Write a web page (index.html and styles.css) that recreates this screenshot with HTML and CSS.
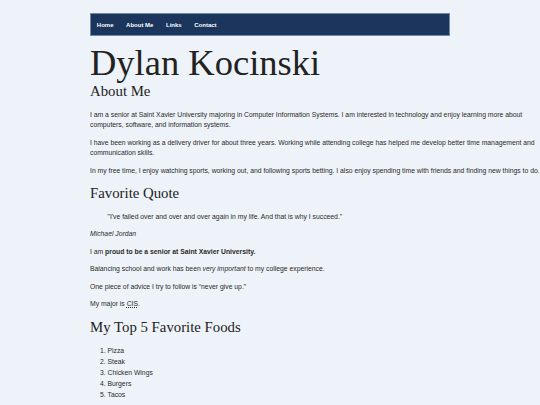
FILE: index.html
```html
<!DOCTYPE html>
<html lang="en">
<head>
<meta charset="utf-8">
<title>Dylan Kocinski</title>
<link rel="stylesheet" href="styles.css">
</head>
<body>
<div class="page">
  <nav class="nav">
    <a href="#">Home</a>
    <a href="#">About Me</a>
    <a href="#">Links</a>
    <a href="#">Contact</a>
  </nav>
  <h1 class="title">Dylan Kocinski</h1>
  <h2 class="sub">About Me</h2>
  <p>I am a senior at Saint Xavier University majoring in Computer Information Systems. I am interested in technology and enjoy learning more about computers, software, and information systems.</p>
  <p>I have been working as a delivery driver for about three years. Working while attending college has helped me develop better time management and communication skills.</p>
  <p>In my free time, I enjoy watching sports, working out, and following sports betting. I also enjoy spending time with friends and finding new things to do.</p>
  <h2 class="section">Favorite Quote</h2>
  <blockquote class="quote">"I've failed over and over and over again in my life. And that is why I succeed."</blockquote>
  <p><cite>Michael Jordan</cite></p>
  <p>I am <strong>proud to be a senior at Saint Xavier University.</strong></p>
  <p>Balancing school and work has been <em>very important</em> to my college experience.</p>
  <p>One piece of advice I try to follow is <q>never give up.</q></p>
  <p>My major is <abbr title="Computer Information Systems">CIS</abbr>.</p>
  <h2 class="section">My Top 5 Favorite Foods</h2>
  <ol class="foods">
    <li>Pizza</li>
    <li>Steak</li>
    <li>Chicken Wings</li>
    <li>Burgers</li>
    <li>Tacos</li>
  </ol>
</div>
</body>
</html>
```
FILE: styles.css
```css
html, body {
  margin: 0;
  padding: 0;
  background: #eef3f9;
  overflow: hidden;
}
body {
  font-family: "Liberation Sans", Arial, sans-serif;
  color: #2a2a2a;
  font-size: 6.8px;
  line-height: 10.5px;
}
.page {
  padding: 13px 0 0 90px;
}
.nav {
  width: 358px;
  height: 21px;
  background: #1b355c;
  border: 1px solid #7189aa;
  display: flex;
  align-items: center;
  padding: 0;
  box-sizing: content-box;
}
.nav a {
  color: #fff;
  font-weight: bold;
  font-size: 6px;
  padding: 0 6.3px;
  text-decoration: none;
  line-height: 1;
}
.nav a:first-child {
  padding-left: 5.8px;
}
.title,
.sub,
.section {
  font-family: "Liberation Serif", "Times New Roman", serif;
  font-weight: normal;
  color: #222;
}
.title {
  font-size: 36.5px;
  line-height: 36.5px;
  margin: 9.4px 0 0;
}
.sub {
  font-size: 14.8px;
  line-height: 17px;
  margin: 1.3px 0 9.4px;
}
.section {
  font-size: 14.8px;
  line-height: 17px;
  margin: 9.3px 0 9.3px;
}
p {
  margin: 0 0 7px;
}
.quote {
  margin: 0 0 7px 17.5px;
}
cite {
  font-style: italic;
}
q {
  quotes: "\201C" "\201D";
}
abbr {
  text-decoration: underline dotted;
}
.foods {
  margin: 0;
  padding-left: 17.5px;
  line-height: 11px;
}
```
